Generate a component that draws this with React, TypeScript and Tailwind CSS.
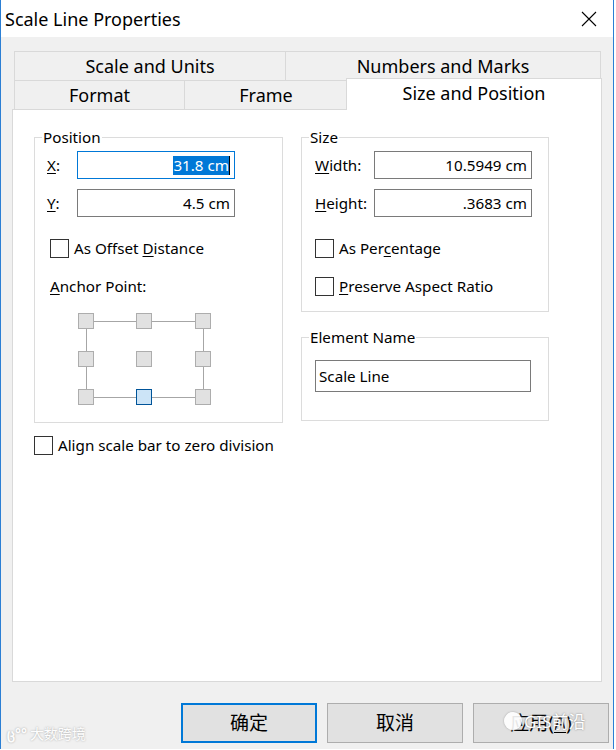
import React from 'react';

const Check = ({ children }: { children: React.ReactNode }) => (
  <div className="flex items-center h-[20px]">
    <span className="w-[19px] h-[19px] border border-[#333333] bg-white shrink-0" />
    <span className="ml-[5px] leading-[20px]">{children}</span>
  </div>
);

const Field = ({ value, focused }: { value: string; focused?: boolean }) => (
  <div
    className={`w-[158px] h-[28px] border bg-white flex items-center justify-end pr-[4px] ${
      focused ? 'border-[#0078d7]' : 'border-[#7a7a7a]'
    }`}
  >
    {focused ? (
      <>
        <span className="bg-[#0078d7] text-white leading-[19px]">{value}</span>
        <span className="w-[1px] h-[19px] bg-black" />
      </>
    ) : (
      <span className="leading-[19px]">{value}</span>
    )}
  </div>
);

function AnchorGrid() {
  const cols = [0, 58, 117];
  const rows = [0, 38, 76];
  return (
    <svg width="134" height="93" viewBox="0 0 134 93">
      <g stroke="#a6a6a6" strokeWidth="1">
        <line x1="16" y1="8.5" x2="58" y2="8.5" />
        <line x1="74" y1="8.5" x2="117" y2="8.5" />
        <line x1="16" y1="84.5" x2="58" y2="84.5" />
        <line x1="74" y1="84.5" x2="117" y2="84.5" />
        <line x1="8.5" y1="16" x2="8.5" y2="38" />
        <line x1="8.5" y1="54" x2="8.5" y2="76" />
        <line x1="125.5" y1="16" x2="125.5" y2="38" />
        <line x1="125.5" y1="54" x2="125.5" y2="76" />
      </g>
      {rows.map((y, r) =>
        cols.map((x, c) => {
          const sel = r === 2 && c === 1;
          return (
            <rect
              key={`${r}-${c}`}
              x={x + 0.5}
              y={y + 0.5}
              width="15"
              height="15"
              fill={sel ? '#cce4f7' : '#e1e1e1'}
              stroke={sel ? '#005499' : '#adadad'}
            />
          );
        })
      )}
    </svg>
  );
}

export default function App() {
  return (
    <div className="w-[616px] h-[750px] bg-white font-['Noto_Sans','Noto_Sans_CJK_SC',sans-serif] text-black">
      <div className="w-[614px] h-[749px] border-x border-b border-[#2b7fd4] flex flex-col">
        {/* title bar */}
        <div className="h-[37px] bg-white flex items-center justify-between shrink-0">
          <span className="pl-[4px] text-[18px] leading-[24px]">Scale Line Properties</span>
          <svg width="16" height="16" viewBox="0 0 16 16" className="mr-[16px]">
            <path d="M1 1 L15 15 M15 1 L1 15" stroke="#000" strokeWidth="1.1" />
          </svg>
        </div>

        {/* body */}
        <div className="flex-1 bg-[#f0f0f0] pl-[11px] pt-[14px] pb-[6px] flex flex-col relative">
          {/* tabs */}
          <div className="w-[590px] text-[18px]">
            <div className="flex ml-[2px]">
              <div className="w-[272px] h-[29px] border-l border-t border-r border-[#d9d9d9] flex items-center justify-center">
                Scale and Units
              </div>
              <div className="w-[315px] h-[29px] border-t border-r border-[#d9d9d9] flex items-center justify-center">
                Numbers and Marks
              </div>
            </div>
            <div className="flex ml-[2px] items-end h-[29px]">
              <div className="w-[171px] h-[29px] border-l border-t border-r border-[#d9d9d9] flex items-center justify-center">
                Format
              </div>
              <div className="w-[162px] h-[29px] border-t border-[#d9d9d9] flex items-center justify-center">
                Frame
              </div>
              <div className="relative z-10 -ml-[1px] w-[256px] h-[32px] -mb-[1px] bg-white border-l border-t border-r border-[#d9d9d9] flex items-center justify-center pb-[3px]">
                Size and Position
              </div>
            </div>
          </div>

          {/* panel */}
          <div className="w-[590px] h-[573px] bg-white border border-[#d9d9d9] text-[15.2px] pl-[21px] pt-[17px]">
            <div className="flex gap-[18px]">
              {/* left column */}
              <div className="w-[249px]">
                <fieldset className="border border-[#dcdcdc] w-[249px] h-[296px]">
                  <legend className="ml-[7px] px-[1px] leading-[20px]">Position</legend>
                  <div className="flex items-center mt-[4px] pl-[12px]">
                    <span className="w-[30px]">
                      <span className="underline underline-offset-2">X</span>:
                    </span>
                    <Field value="31.8 cm" focused />
                  </div>
                  <div className="flex items-center mt-[10px] pl-[12px]">
                    <span className="w-[30px]">
                      <span className="underline underline-offset-2">Y</span>:
                    </span>
                    <Field value="4.5 cm" />
                  </div>
                  <div className="mt-[21px] pl-[15px]">
                    <Check>
                      As Offset <span className="underline underline-offset-2">D</span>istance
                    </Check>
                  </div>
                  <div className="mt-[18px] pl-[15px] leading-[20px]">
                    <span className="underline underline-offset-2">A</span>nchor Point:
                  </div>
                  <div className="mt-[17px] pl-[43px]">
                    <AnchorGrid />
                  </div>
                </fieldset>
                <div className="mt-[12px]">
                  <Check>Align scale bar to zero division</Check>
                </div>
              </div>

              {/* right column */}
              <div className="w-[248px]">
                <fieldset className="border border-[#dcdcdc] w-[248px] h-[185px]">
                  <legend className="ml-[7px] px-[1px] leading-[20px]">Size</legend>
                  <div className="flex items-center mt-[4px] pl-[13px]">
                    <span className="w-[59px]">
                      <span className="underline underline-offset-2">W</span>idth:
                    </span>
                    <Field value="10.5949 cm" />
                  </div>
                  <div className="flex items-center mt-[10px] pl-[13px]">
                    <span className="w-[59px]">
                      <span className="underline underline-offset-2">H</span>eight:
                    </span>
                    <Field value=".3683 cm" />
                  </div>
                  <div className="mt-[21px] pl-[13px]">
                    <Check>
                      As Per<span className="underline underline-offset-2">c</span>entage
                    </Check>
                  </div>
                  <div className="mt-[18px] pl-[13px]">
                    <Check>
                      <span className="underline underline-offset-2">P</span>reserve Aspect Ratio
                    </Check>
                  </div>
                </fieldset>
                <fieldset className="mt-[15px] border border-[#dcdcdc] w-[248px] h-[94px]">
                  <legend className="ml-[7px] px-[1px] leading-[20px]">Element Name</legend>
                  <div className="mt-[13px] ml-[13px] w-[216px] h-[32px] border border-[#7a7a7a] pl-[3px] flex items-center">
                    Scale Line
                  </div>
                </fieldset>
              </div>
            </div>
          </div>

          {/* buttons */}
          <div className="mt-[21px] flex justify-end gap-[10px] pr-[4px] text-[19px]">
            <button className="w-[136px] h-[40px] bg-[#e1e1e1] border-2 border-[#0078d7]">确定</button>
            <button className="w-[136px] h-[40px] bg-[#e1e1e1] border border-[#adadad]">取消</button>
            <button className="w-[136px] h-[40px] bg-[#e1e1e1] border border-[#adadad]">
              应用(<span className="underline underline-offset-2">A</span>)
            </button>
          </div>

          {/* watermarks */}
          <div className="absolute left-[6px] bottom-[5px] flex items-center gap-[3px] text-[14px] text-white opacity-90 [text-shadow:0_0_2px_#9a9a9a]">
            <span className="font-bold">ც°°</span>
            <span>大数跨境</span>
          </div>
          <div className="absolute left-[503px] bottom-[15px] flex items-center gap-[2px] text-[17px] text-white [text-shadow:0_0_2px_#7a7a7a]">
            <span className="w-[18px] h-[18px] rounded-full bg-white/90 shadow-[0_0_2px_#999]" />
            <span>GIS前沿</span>
          </div>
        </div>
      </div>
    </div>
  );
}
